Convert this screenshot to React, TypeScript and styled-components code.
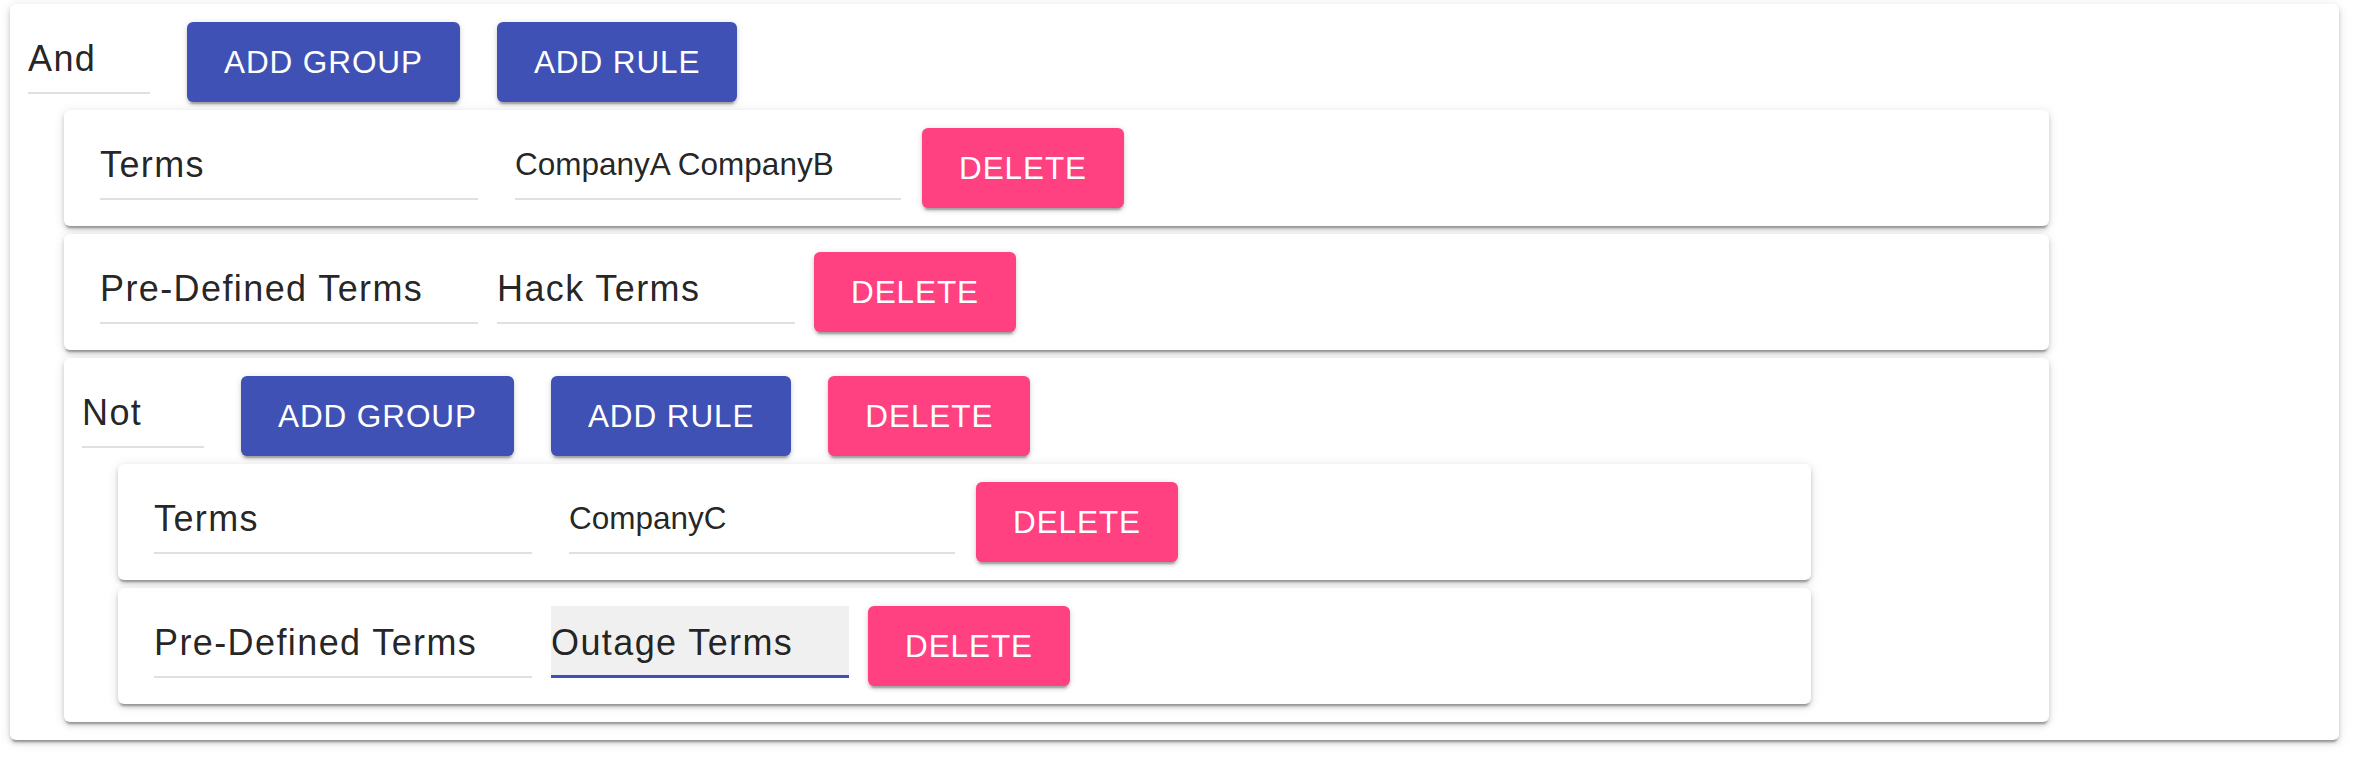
import React from 'react';
import styled, { createGlobalStyle } from 'styled-components';

const GlobalStyle = createGlobalStyle`
  html, body {
    margin: 0;
    padding: 0;
    background: #ffffff;
  }
  body {
    font-family: "Liberation Sans", Arial, sans-serif;
    color: rgba(0, 0, 0, 0.87);
  }
  * { box-sizing: border-box; }
`;

const Page = styled.div`
  padding: 4px 16px 19px 10px;
`;

const Card = styled.div<{ $nested?: boolean }>`
  background: #ffffff;
  border-radius: 6px;
  box-shadow: 0 4px 2px -2px rgba(0, 0, 0, 0.26), 0 3px 4px 0 rgba(0, 0, 0, 0.17),
    0 2px 12px 0 rgba(0, 0, 0, 0.12);
  width: ${(p) => (p.$nested ? 'calc(85% + 36px)' : '100%')};
  margin-left: ${(p) => (p.$nested ? '36px' : '0')};
`;

const Group = styled(Card)`
  display: flex;
  flex-direction: column;
  padding: 18px;
`;

const GroupHeader = styled.div`
  display: flex;
  align-items: flex-start;
  gap: 37px;
  margin-bottom: 8px;
`;

const Children = styled.div`
  display: flex;
  flex-direction: column;
  gap: 8px;
`;

const Rule = styled(Card)`
  display: flex;
  align-items: flex-start;
  gap: 19px;
  padding: 18px 18px 18px 36px;
`;

const SelectField = styled.div<{ $width: number; $focused?: boolean }>`
  flex-shrink: 0;
  width: ${(p) => p.$width}px;
  height: 72px;
  padding-top: 16px;
  font-size: 36px;
  line-height: 41px;
  letter-spacing: 1.4px;
  white-space: nowrap;
  color: rgba(0, 0, 0, 0.87);
  background: ${(p) => (p.$focused ? 'rgba(0, 0, 0, 0.06)' : 'transparent')};
  border-bottom: ${(p) => (p.$focused ? '3px solid #3f51b5' : '2px solid #e0e0e0')};
`;

const TextField = styled.div<{ $width: number }>`
  flex-shrink: 0;
  width: ${(p) => p.$width}px;
  height: 72px;
  margin-left: 18px;
  margin-right: 2px;
  padding-top: 18px;
  font-size: 31.5px;
  line-height: 36px;
  white-space: nowrap;
  color: rgba(0, 0, 0, 0.87);
  border-bottom: 2px solid #e0e0e0;
`;

const Button = styled.button<{ $variant: 'primary' | 'danger' }>`
  flex-shrink: 0;
  height: 80px;
  padding: 0 37px;
  border: none;
  border-radius: 6px;
  background: ${(p) => (p.$variant === 'primary' ? '#3f51b5' : '#ff4081')};
  color: #ffffff;
  font-family: "Liberation Sans", Arial, sans-serif;
  font-size: 31.5px;
  font-weight: 400;
  letter-spacing: 0.9px;
  text-transform: uppercase;
  cursor: pointer;
  box-shadow: 0 4.5px 1.5px -3px rgba(0, 0, 0, 0.2), 0 3px 3px 0 rgba(0, 0, 0, 0.14),
    0 1.5px 7.5px 0 rgba(0, 0, 0, 0.12);
`;

type RuleData =
  | { kind: 'terms'; value: string }
  | { kind: 'predefined'; value: string; focused?: boolean };

const RuleCard: React.FC<{ rule: RuleData }> = ({ rule }) => (
  <Rule $nested>
    {rule.kind === 'terms' ? (
      <>
        <SelectField $width={378}>Terms</SelectField>
        <TextField $width={386}>{rule.value}</TextField>
      </>
    ) : (
      <>
        <SelectField $width={378}>Pre-Defined Terms</SelectField>
        <SelectField $width={298} $focused={rule.focused}>
          {rule.value}
        </SelectField>
      </>
    )}
    <Button $variant="danger">Delete</Button>
  </Rule>
);

export default function App() {
  return (
    <>
      <GlobalStyle />
      <Page>
        <Group>
          <GroupHeader>
            <SelectField $width={122}>And</SelectField>
            <Button $variant="primary">Add Group</Button>
            <Button $variant="primary">Add Rule</Button>
          </GroupHeader>
          <Children>
            <RuleCard rule={{ kind: 'terms', value: 'CompanyA CompanyB' }} />
            <RuleCard rule={{ kind: 'predefined', value: 'Hack Terms' }} />
            <Group $nested>
              <GroupHeader>
                <SelectField $width={122}>Not</SelectField>
                <Button $variant="primary">Add Group</Button>
                <Button $variant="primary">Add Rule</Button>
                <Button $variant="danger">Delete</Button>
              </GroupHeader>
              <Children>
                <RuleCard rule={{ kind: 'terms', value: 'CompanyC' }} />
                <RuleCard rule={{ kind: 'predefined', value: 'Outage Terms', focused: true }} />
              </Children>
            </Group>
          </Children>
        </Group>
      </Page>
    </>
  );
}
